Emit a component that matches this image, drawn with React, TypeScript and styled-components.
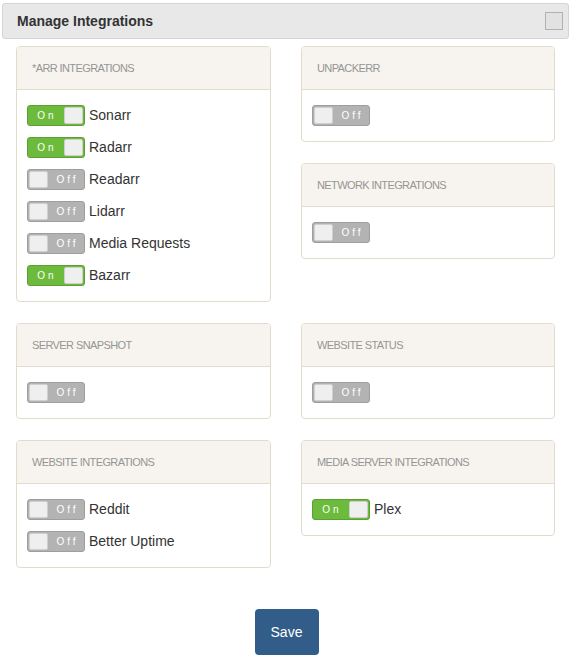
import React from "react";
import styled, { createGlobalStyle } from "styled-components";

const Global = createGlobalStyle`
  body { margin: 0; background: #fff; font-family: "Liberation Sans", Arial, sans-serif; }
  * { box-sizing: border-box; }
`;

const Page = styled.div`
  width: 572px;
  padding: 3px 3px 0 2px;
`;

const TopBar = styled.div`
  height: 36px;
  background: #e8e8e8;
  border: 1px solid #d4d4d4;
  border-radius: 3px;
  display: flex;
  align-items: center;
  justify-content: space-between;
  padding: 0 5px 0 14px;
`;

const Title = styled.h1`
  margin: 0;
  font-size: 14px;
  font-weight: bold;
  color: #333;
`;

const Box = styled.span`
  width: 18px;
  height: 18px;
  border: 1px solid #b0b0b0;
  background: #e2e2e2;
  display: block;
`;

const Grid = styled.div`
  display: grid;
  grid-template-columns: 255px 254px;
  column-gap: 30px;
  row-gap: 21px;
  padding: 7px 0 0 14px;
  align-items: start;
`;

const Stack = styled.div`
  display: flex;
  flex-direction: column;
  gap: 21px;
`;

const Card = styled.section`
  border: 1px solid #e3dccd;
  border-radius: 4px;
  background: #fff;
  overflow: hidden;
`;

const CardHead = styled.div`
  height: 43px;
  background: #f7f4ef;
  border-bottom: 1px solid #e3dccd;
  display: flex;
  align-items: center;
  padding: 0 15px;
  font-size: 11px;
  letter-spacing: -0.6px;
  color: #959595;
  text-transform: uppercase;
`;

const CardBody = styled.div`
  padding: 15px 10px 15px 10px;
  display: flex;
  flex-direction: column;
  gap: 11px;
`;

const Row = styled.div`
  display: flex;
  align-items: flex-start;
  gap: 4px;
  height: 21px;
`;

const Label = styled.span`
  font-size: 14px;
  color: #333;
  line-height: 18px;
  padding-top: 1px;
`;

const Toggle = styled.span<{ $on: boolean }>`
  width: 58px;
  height: 21px;
  border-radius: 3px;
  border: 1px solid ${(p) => (p.$on ? "#5ca033" : "#9e9e9e")};
  background: ${(p) => (p.$on ? "#6cbb3c" : "#b3b3b3")};
  display: flex;
  flex-direction: ${(p) => (p.$on ? "row" : "row-reverse")};
  align-items: center;
  justify-content: space-between;
  padding: 0 1px;
  flex-shrink: 0;
`;

const ToggleText = styled.span<{ $on: boolean }>`
  color: #fff;
  font-size: 10px;
  letter-spacing: 3px;
  flex: 1;
  text-align: center;
  padding-left: ${(p) => (p.$on ? "1px" : "4px")};
  padding-top: 1px;
  line-height: 1;
`;

const Knob = styled.span`
  width: 19px;
  height: 17px;
  background: #efefef;
  border: 1px solid #cfcfcf;
  border-radius: 2px;
`;

const Footer = styled.div`
  display: flex;
  justify-content: center;
  padding: 41px 0 0 0;
`;

const SaveBtn = styled.button`
  width: 64px;
  height: 46px;
  background: #325d88;
  color: #fff;
  border: none;
  border-radius: 4px;
  font-family: "Liberation Sans", Arial, sans-serif;
  font-size: 14px;
  margin-left: 2px;
`;

type Item = { label?: string; on: boolean };

const Switch = ({ on, label }: Item) => (
  <Row>
    <Toggle $on={on}>
      <ToggleText $on={on}>{on ? "On" : "Off"}</ToggleText>
      <Knob />
    </Toggle>
    {label && <Label>{label}</Label>}
  </Row>
);

const Panel = ({ title, items }: { title: string; items: Item[] }) => (
  <Card>
    <CardHead>{title}</CardHead>
    <CardBody>
      {items.map((it, i) => (
        <Switch key={i} {...it} />
      ))}
    </CardBody>
  </Card>
);

export default function App() {
  return (
    <Page>
      <Global />
      <TopBar>
        <Title>Manage Integrations</Title>
        <Box />
      </TopBar>
      <Grid>
        <Panel
          title="*Arr Integrations"
          items={[
            { label: "Sonarr", on: true },
            { label: "Radarr", on: true },
            { label: "Readarr", on: false },
            { label: "Lidarr", on: false },
            { label: "Media Requests", on: false },
            { label: "Bazarr", on: true },
          ]}
        />
        <Stack>
          <Panel title="Unpackerr" items={[{ on: false }]} />
          <Panel title="Network Integrations" items={[{ on: false }]} />
        </Stack>
        <Panel title="Server Snapshot" items={[{ on: false }]} />
        <Panel title="Website Status" items={[{ on: false }]} />
        <Panel
          title="Website Integrations"
          items={[
            { label: "Reddit", on: false },
            { label: "Better Uptime", on: false },
          ]}
        />
        <Panel title="Media Server Integrations" items={[{ label: "Plex", on: true }]} />
      </Grid>
      <Footer>
        <SaveBtn>Save</SaveBtn>
      </Footer>
    </Page>
  );
}
